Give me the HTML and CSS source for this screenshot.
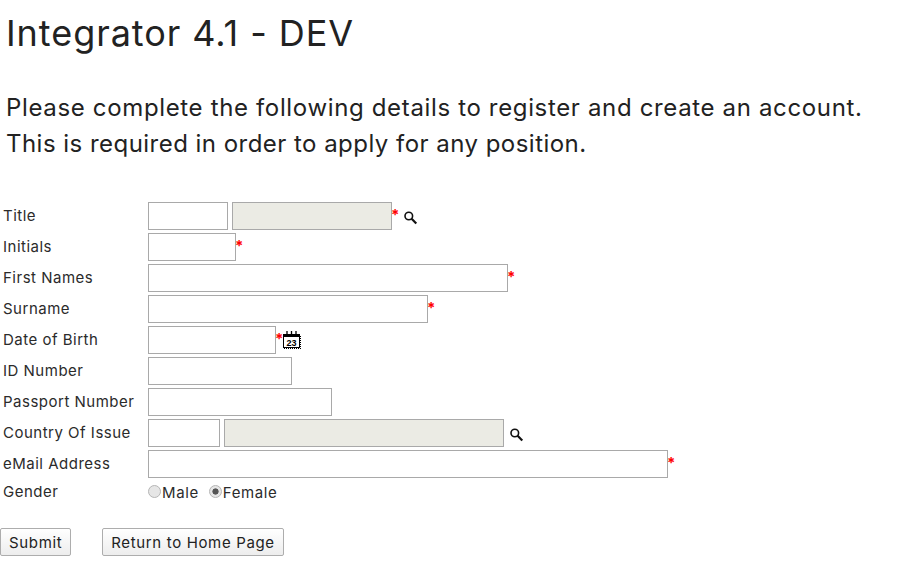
FILE: index.html
```html
<!DOCTYPE html>
<html lang="en">
<head>
<meta charset="utf-8">
<title>Integrator 4.1 - DEV</title>
<link rel="stylesheet" href="styles.css">
</head>
<body>
<h1 class="title">Integrator 4.1 - DEV</h1>
<p class="intro">Please complete the following details to register and create an account.<br><span class="intro-second">This is required in order to apply for any position.</span></p>
<form class="form">
  <div class="row"><label class="label">Title</label><div class="field">
    <input class="input w80"><input class="input ro w160 gap4" readonly><span class="req">*</span>
    <svg class="search search-title" width="14" height="14" viewBox="0 0 14 14"><circle cx="4.8" cy="5" r="3.8" fill="none" stroke="#111" stroke-width="1.6"/><path d="M7.6 7.8L12.3 12.5" stroke="#111" stroke-width="2.2"/></svg>
  </div></div>
  <div class="row"><label class="label">Initials</label><div class="field"><input class="input w88"><span class="req">*</span></div></div>
  <div class="row"><label class="label">First Names</label><div class="field"><input class="input w360"><span class="req">*</span></div></div>
  <div class="row"><label class="label">Surname</label><div class="field"><input class="input w280"><span class="req">*</span></div></div>
  <div class="row"><label class="label">Date of Birth</label><div class="field"><input class="input w128"><span class="req">*</span>
    <svg class="cal" width="20" height="18" viewBox="0 0 20 18"><rect x="1.5" y="4.5" width="16" height="12" fill="#fff" stroke="#000"/><rect x="1" y="3" width="17" height="3" fill="#000"/><path d="M5 0v4M9.5 0v4M14 0v4" stroke="#000" stroke-width="1.3"/><path d="M18.5 5v12M2 17.5h17" stroke="#000" stroke-dasharray="1 1"/><text class="cal-num" x="9.5" y="14.5" text-anchor="middle">23</text></svg>
  </div></div>
  <div class="row"><label class="label">ID Number</label><div class="field"><input class="input w144"></div></div>
  <div class="row"><label class="label">Passport Number</label><div class="field"><input class="input w184"></div></div>
  <div class="row"><label class="label">Country Of Issue</label><div class="field">
    <input class="input w72"><input class="input ro w280 gap4" readonly>
    <svg class="search" width="14" height="14" viewBox="0 0 14 14"><circle cx="4.8" cy="5" r="3.8" fill="none" stroke="#111" stroke-width="1.6"/><path d="M7.6 7.8L12.3 12.5" stroke="#111" stroke-width="2.2"/></svg>
  </div></div>
  <div class="row"><label class="label">eMail Address</label><div class="field"><input class="input w520"><span class="req">*</span></div></div>
  <div class="row row-radio"><label class="label">Gender</label><div class="field">
    <label class="radio"><input type="radio" name="g">Male</label>
    <label class="radio"><input type="radio" name="g" checked>Female</label>
  </div></div>
  <div class="actions">
    <button type="button" class="btn">Submit</button>
    <button type="button" class="btn">Return to Home Page</button>
  </div>
</form>
</body>
</html>
```
FILE: styles.css
```css
html, body { margin: 0; padding: 0; background: #fff; }
body { font-family: "Inter", "Liberation Sans", sans-serif; color: #2b2b2b; }
.title { margin: 0; padding: 12px 0 0 6px; font-size: 36px; line-height: 42px; font-weight: 400; color: #222; letter-spacing: 0.95px; }
.intro { margin: 0; padding: 36px 0 0 6px; font-size: 24px; line-height: 36px; font-weight: 400; color: #222; letter-spacing: 0.65px; }
.intro-second { letter-spacing: 0.47px; }
.form { display: flex; flex-direction: column; padding-top: 40px; }
.row { display: flex; align-items: flex-start; height: 31px; }
.row-radio { height: 22px; }
.label { width: 148px; padding-left: 3px; box-sizing: border-box; font-size: 15px; line-height: 28px; letter-spacing: 0.5px; }
.row-radio .label { line-height: 22px; }
.field { display: flex; align-items: flex-start; }
.input { height: 28px; box-sizing: border-box; border: 1px solid #a9a9a9; background: #fff; padding: 0; margin: 0; }
.ro { background: #ebebe4; }
.gap4 { margin-left: 4px; }
.w72 { width: 72px; } .w80 { width: 80px; } .w88 { width: 88px; } .w128 { width: 128px; }
.w144 { width: 144px; } .w160 { width: 160px; } .w184 { width: 184px; } .w280 { width: 280px; }
.w360 { width: 360px; } .w520 { width: 520px; }
.req { color: #f00; font-size: 15px; line-height: 20px; font-weight: 700; width: 6px; margin-top: 3px; margin-left: -1px; }
.search { margin: 9px 0 0 6px; }
.search-title { margin-left: 7px; }
.cal { margin: 5px 0 0 1px; }
.cal-num { font: 700 9px "Liberation Sans", sans-serif; fill: #000; }
.radio { display: flex; align-items: center; height: 22px; font-size: 15px; margin-right: 10px; letter-spacing: 0.6px; }
.radio input { appearance: none; width: 13px; height: 13px; margin: 0 1px 2px 0; border: 1px solid #b5b5b5; border-radius: 50%; background: #e6e6e6; box-sizing: border-box; }
.radio input:checked { background: radial-gradient(circle, #555 0 2.8px, #e6e6e6 3.4px); }
.actions { display: flex; gap: 31px; padding-top: 25px; }
.btn { height: 28px; padding: 0 8px; border: 1px solid #adadad; border-radius: 2px; background: linear-gradient(#fff, #ededed); font: 15px "Inter", "Liberation Sans", sans-serif; color: #222; letter-spacing: 0.65px; }
```
